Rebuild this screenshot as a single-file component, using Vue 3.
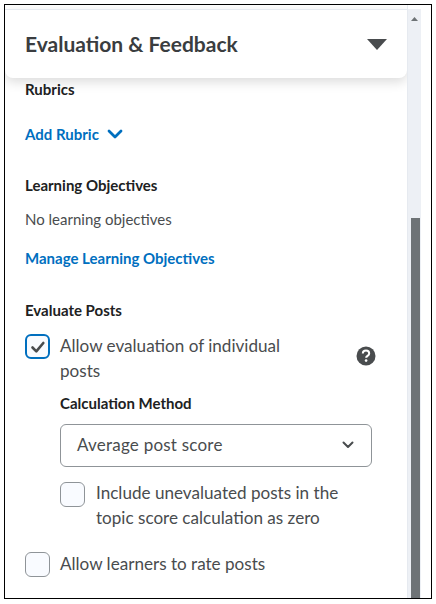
<template>
  <div class="frame">
    <div class="panel">
      <header class="panel-header">
        <h2>Evaluation &amp; Feedback</h2>
        <svg class="caret" width="20" height="12" viewBox="0 0 20 12"><path d="M0 1h20L10 12z" fill="#494c4e" /></svg>
      </header>

      <div class="panel-body">
        <h3 class="rubrics-title">Rubrics</h3>
        <a class="link add-rubric">
          Add Rubric
          <svg width="16" height="10" viewBox="0 0 16 10"><path d="M2 2l6 6 6-6" fill="none" stroke="#006fbf" stroke-width="2.8" stroke-linecap="round" stroke-linejoin="round" /></svg>
        </a>

        <h3 class="objectives-title">Learning Objectives</h3>
        <p class="muted">No learning objectives</p>
        <a class="link manage">Manage Learning Objectives</a>

        <h3 class="evaluate-title">Evaluate Posts</h3>
        <div class="check-row first">
          <span class="box checked">
            <svg width="16" height="14" viewBox="0 0 16 14"><path d="M2.500 7.500l3.800 3.800 7-8.300" fill="none" stroke="#494c4e" stroke-width="2.6" stroke-linecap="round" stroke-linejoin="round" /></svg>
          </span>
          <span class="check-label narrow">Allow evaluation of individual posts</span>
          <svg class="help" width="20" height="20" viewBox="0 0 20 20">
            <circle cx="10" cy="10" r="9.5" fill="#494c4e" />
            <path d="M6.800 7.600c0-1.900 1.400-3 3.200-3s3.200 1.100 3.200 2.800c0 2.400-3.100 2.400-3.100 4.400" fill="none" stroke="#fff" stroke-width="2" />
            <circle cx="10.1" cy="14.6" r="1.3" fill="#fff" />
          </svg>
        </div>

        <div class="nested">
          <h3 class="method-title">Calculation Method</h3>
          <div class="select">
            <span class="select-value">Average post score</span>
            <svg width="12" height="8" viewBox="0 0 12 8"><path d="M1.500 1.500L6 6l4.500-4.500" fill="none" stroke="#494c4e" stroke-width="2" stroke-linecap="round" stroke-linejoin="round" /></svg>
          </div>
          <div class="check-row include">
            <span class="box"></span>
            <span class="check-label wrapped">Include unevaluated posts in the topic score calculation as zero</span>
          </div>
        </div>

        <div class="check-row rate">
          <span class="box"></span>
          <span class="check-label">Allow learners to rate posts</span>
        </div>
      </div>
    </div>

    <div class="scrollbar">
      <svg class="arrow" width="7" height="4" viewBox="0 0 7 4"><path d="M3.500 0L7 4H0z" fill="#6e7376" /></svg>
      <div class="thumb"></div>
    </div>
  </div>
</template>

<script setup>
</script>

<style>
html, body {
  margin: 0;
  background: #fff;
}
</style>

<style scoped>
.frame {
  box-sizing: border-box;
  width: 428px;
  height: 595px;
  margin: 4px 0 0 4px;
  border: 1px solid #000;
  display: flex;
  overflow: hidden;
  font-family: Lato, sans-serif;
  color: #494c4e;
}

.panel {
  width: 402px;
  flex: none;
  border-right: 1px solid #e6eaf0;
  overflow: hidden;
}

.panel-header {
  position: relative;
  display: flex;
  justify-content: space-between;
  align-items: center;
  height: 69px;
  margin-top: 4px;
  padding: 0 20px 2px;
  background: #fff;
  border-top: 1px solid #e6eaf0;
  box-sizing: border-box;
  border-radius: 0 0 8px 8px;
  box-shadow: 0 4px 12px rgba(0, 0, 0, 0.14);
}

.panel-header h2 {
  margin: 0;
  font-size: 21px;
  font-weight: 700;
  color: #3a3d40;
}

.caret {
  margin-top: 2px;
}

.panel-body {
  padding: 0 20px;
}

h3 {
  margin: 0;
  font-size: 15px;
  font-weight: 700;
  line-height: 20px;
  color: #202122;
}

.rubrics-title {
  margin-top: 1px;
}

.link {
  display: flex;
  align-items: center;
  gap: 8px;
  font-size: 15px;
  font-weight: 700;
  line-height: 20px;
  color: #006fbf;
}

.add-rubric {
  margin-top: 25px;
}

.objectives-title {
  margin-top: 31px;
}

.muted {
  margin: 14px 0 0;
  font-size: 15px;
  line-height: 20px;
}

.manage {
  margin-top: 19px;
}

.evaluate-title {
  margin-top: 32px;
}

.check-row {
  display: flex;
  align-items: flex-start;
  gap: 10px;
  font-size: 17.1px;
  line-height: 25px;
}

.first {
  margin-top: 14px;
  position: relative;
}

.box {
  box-sizing: border-box;
  flex: none;
  width: 25px;
  height: 25px;
  border: 1px solid #8f9498;
  border-radius: 6px;
  background: #f9fbff;
  display: flex;
  align-items: center;
  justify-content: center;
}

.box.checked {
  border: 2px solid #006fbf;
}

.check-label {
  margin-top: -1px;
}

.check-label.narrow {
  width: 240px;
}

.check-label.wrapped {
  width: 260px;
  margin-top: -2px;
  margin-left: 1px;
}

.help {
  position: absolute;
  left: 331px;
  top: 12px;
}

.nested {
  margin-left: 35px;
}

.method-title {
  margin-top: 10px;
}

.select {
  box-sizing: border-box;
  display: flex;
  justify-content: space-between;
  align-items: center;
  width: 312px;
  height: 43px;
  margin-top: 11px;
  padding: 0 17px 1px 16px;
  border: 1px solid #8f9498;
  border-radius: 6px;
  font-size: 17px;
  letter-spacing: 0.22px;
}

.select-value {
  margin-top: -2px;
}

.include {
  margin-top: 15px;
}

.rate {
  margin-top: 22px;
}

.scrollbar {
  position: relative;
  flex: none;
  width: 13px;
  margin-top: 4px;
  background: #edf0f5;
}

.arrow {
  position: absolute;
  left: 3px;
  top: 8px;
}

.thumb {
  position: absolute;
  left: 3px;
  right: 1px;
  top: 209px;
  bottom: 0;
  background: #6e7376;
}
</style>
